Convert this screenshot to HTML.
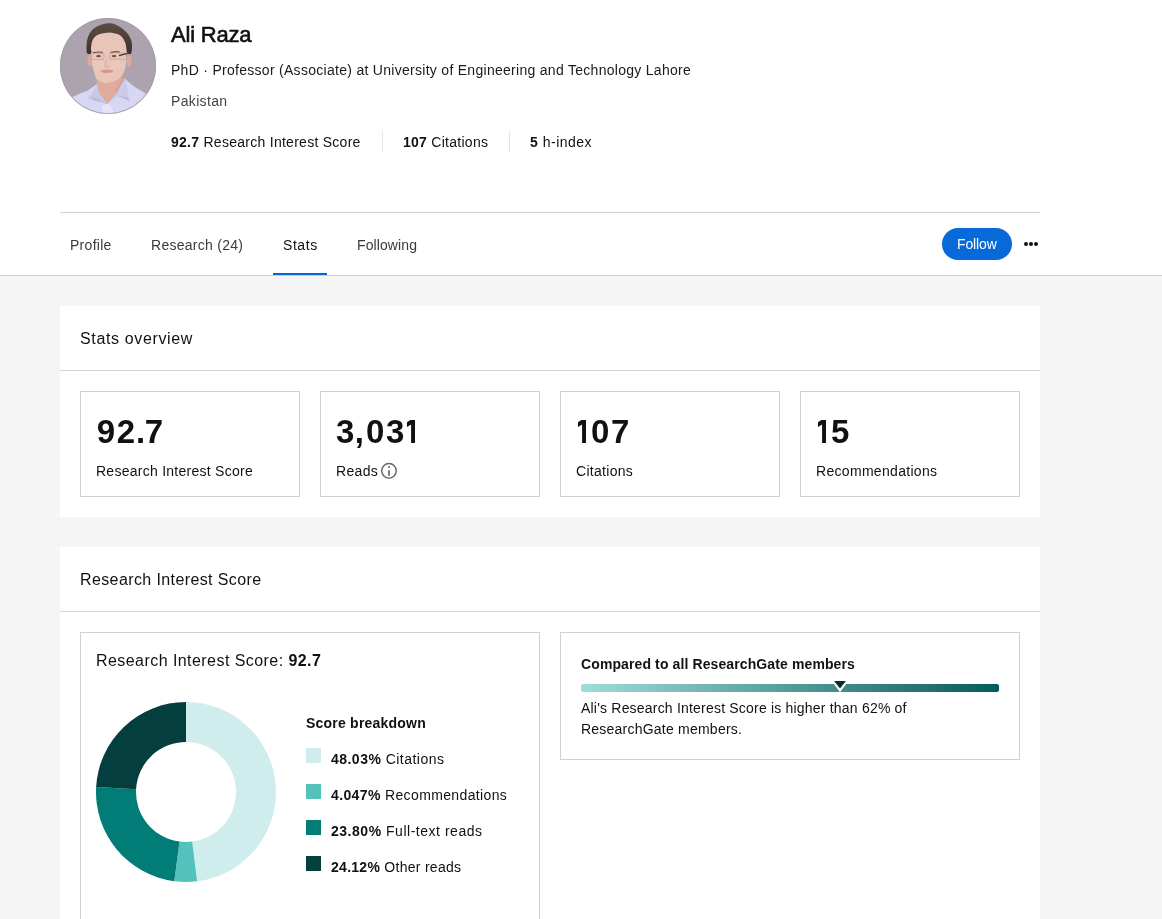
<!DOCTYPE html>
<html><head><meta charset="utf-8">
<style>
*{box-sizing:border-box;margin:0;padding:0}
html,body{width:1162px;height:919px;overflow:hidden}
body{font-family:"Liberation Sans",sans-serif;will-change:transform;background:#f5f5f5;color:#111;position:relative}
.a{position:absolute;white-space:nowrap;line-height:1}
#top{position:absolute;left:0;top:0;width:1162px;height:276px;background:#fff;border-bottom:1px solid #d1d1d1}
.hr{position:absolute;left:60px;top:212px;width:980px;height:1px;background:#d1d1d1}
#name{left:171px;top:24px;font-size:22px;-webkit-text-stroke:0.6px #111}
#sub{left:171px;top:63px;font-size:14px;color:#1a1a1a}
#loc{left:171px;top:94px;font-size:14px;color:#444}
.st{top:135px;font-size:14px;color:#111}
.sep{position:absolute;top:131px;width:1px;height:21px;background:#e4e4e4}
.tab{top:238px;font-size:14px;color:#3a3a3a}
.uline{position:absolute;left:273px;top:273px;width:54px;height:2px;background:#0a66d0}
.follow{position:absolute;left:942px;top:228px;width:70px;height:32px;border-radius:16px;background:#076ad8}
#fol{color:#fff;font-size:14px;left:957px;top:237px}
.dot{position:absolute;top:242px;width:4px;height:4px;border-radius:2px;background:#111}
.panel{position:absolute;left:60px;width:980px;background:#fff}
.ptitle{font-size:16px;color:#111}
.pdiv{position:absolute;left:0;width:980px;height:1px;background:#d3d3d3}
.card{position:absolute;border:1px solid #d1d1d1;background:#fff}
.big{font-size:33px;font-weight:bold;color:#111}
.lbl{font-size:14px;color:#111}
.sq{position:absolute;left:306px;width:15px;height:15px}
.lg{font-size:14px;color:#111}
#name{letter-spacing:-0.2px}
#sub{letter-spacing:0.286px}
#loc{letter-spacing:0.34px}
#st1{letter-spacing:0.27px}
#st2{letter-spacing:0.27px}
#st3{letter-spacing:0.5px}
#t1{letter-spacing:0.28px}
#t2{letter-spacing:0.275px}
#t3{letter-spacing:0.57px}
#t4{letter-spacing:0.1px}
#fol{letter-spacing:-0.14px}
#p1t{letter-spacing:0.64px}
#l1{letter-spacing:0.26px}
#l2{letter-spacing:0.35px}
#l3{letter-spacing:0.29px}
#l4{letter-spacing:0.31px}
#p2t{letter-spacing:0.39px}
#ris{letter-spacing:0.44px}
#cmp{letter-spacing:0.11px}
#ali1{letter-spacing:0.2px}
#ali2{letter-spacing:0.225px}
#sbd{letter-spacing:0.22px}
#lg1{letter-spacing:0.47px}
#lg2{letter-spacing:0.37px}
#lg3{letter-spacing:0.52px}
#lg4{letter-spacing:0.28px}
</style></head><body>
<div id="top">
  <svg class="a" style="left:60px;top:18px" width="96" height="96" viewBox="0 0 96 96">
    <defs><clipPath id="cc"><circle cx="48" cy="48" r="48"/></clipPath><linearGradient id="hg" x1="0" y1="0" x2="0" y2="1"><stop offset="0" stop-color="#5e4d45"/><stop offset="1" stop-color="#3d302b"/></linearGradient><filter id="bl" x="-10%" y="-10%" width="120%" height="120%"><feGaussianBlur stdDeviation="0.65"/></filter></defs>
    <circle cx="48" cy="48" r="48" fill="#aca3af"/>
    <g clip-path="url(#cc)"><g filter="url(#bl)">
      <path d="M4 96 L9 81 Q14 77.5 27 73 L37 66 L47 86 L57 74 L65 60.5 Q72 68 80 72 Q86 75 90 80 L94 96 Z" fill="#d8d7f3"/>
      <path d="M36.5 60 L36.8 67 L39 75 L47 86.5 L57 75 L64.5 60 Z" fill="#dfab9d"/>
      <path d="M57 75 L64.5 60 L62 58 L55 74 Z" fill="#d59e92" opacity="0.6"/>
      <path d="M36.8 67.5 L28 80.8 L35 82 L47 86.5 L39 75 Z" fill="#c9c7e8"/>
      <path d="M29 78 L46 84.5 L35 83 Z" fill="#b9b6dc"/>
      <path d="M65.3 61 L69.5 82.5 L57.5 78 L47 86.5 L57 75 Z" fill="#cdcbea"/>
      <path d="M56.5 77.5 L69.3 83 L68 79.5 Z" fill="#b9b6dc"/>
      <path d="M42 87 L46 86 L50 86.5 L55 96 L42 96 Z" fill="#e4e3f8"/>
      <path d="M31.0 34.0C30.9 37.2 31.1 41.0 31.5 44.0C31.9 47.0 32.8 49.3 33.5 52.0C34.2 54.7 34.8 58.0 36.0 60.0C37.2 62.0 39.3 63.2 41.0 64.0C42.7 64.8 44.3 65.1 46.3 65.0C48.3 64.9 50.7 64.3 53.0 63.5C55.3 62.7 58.2 61.6 60.0 60.0C61.8 58.4 63.0 56.3 64.0 54.0C65.0 51.7 65.6 49.0 66.0 46.0C66.4 43.0 66.5 39.3 66.5 36.0C66.5 32.7 66.8 29.0 66.0 26.0C65.2 23.0 63.7 19.8 62.0 18.0C60.3 16.2 58.2 15.6 56.0 15.0C53.8 14.4 51.5 14.3 49.0 14.4C46.5 14.5 43.3 14.6 41.0 15.3C38.7 16.0 36.5 16.9 35.0 18.5C33.5 20.1 32.7 22.4 32.0 25.0C31.3 27.6 31.1 30.8 31.0 34.0Z" fill="#e9c4b8"/>
      <ellipse cx="40" cy="48" rx="5.5" ry="4.5" fill="#efd1c7" opacity="0.3"/>
      <ellipse cx="56" cy="47" rx="6" ry="4.5" fill="#f0d3ca" opacity="0.3"/>
      <ellipse cx="29.8" cy="42.5" rx="2.2" ry="6" fill="#dcaa9c"/>
      <ellipse cx="69" cy="43" rx="2.6" ry="5.8" fill="#dcaa9c"/>
      <path d="M27.1 35.0C26.3 33.2 26.5 27.6 26.8 24.5C27.1 21.4 28.0 18.7 29.2 16.3C30.4 13.9 32.0 11.9 34.1 10.3C36.2 8.7 39.2 7.3 41.8 6.5C44.3 5.7 47.1 5.2 49.4 5.2C51.7 5.2 53.4 5.7 55.4 6.5C57.4 7.3 59.3 8.4 61.3 9.8C63.3 11.2 65.7 13.2 67.3 15.2C68.9 17.2 70.3 19.6 71.1 21.8C71.9 24.0 72.0 26.0 72.0 28.3C72.0 30.6 71.9 34.3 71.1 35.4C70.3 36.5 68.2 36.3 67.3 34.8C66.4 33.2 66.5 28.6 65.7 26.1C64.9 23.6 63.7 21.2 62.4 19.6C61.1 18.0 60.3 17.2 58.1 16.3C55.9 15.4 52.3 14.5 49.4 14.4C46.5 14.3 43.1 15.1 40.7 15.8C38.3 16.5 36.7 17.2 35.2 18.5C33.8 19.8 32.7 21.4 32.0 23.4C31.3 25.4 31.0 28.6 30.9 30.5C30.8 32.4 32.0 34.2 31.4 35.0C30.8 35.8 27.9 36.8 27.1 35.0Z" fill="url(#hg)"/>
      <path d="M33 34.8 Q38 33.5 43 34.5" stroke="#6d5049" stroke-width="1.1" fill="none"/>
      <path d="M50.5 34.5 Q55 33 60 34" stroke="#6d5049" stroke-width="1.1" fill="none"/>
      <rect x="31" y="35.5" width="13" height="6" rx="2" fill="none" stroke="#8f6b68" stroke-width="0.6" opacity="0.45"/>
      <rect x="49.4" y="35" width="17.4" height="6.3" rx="2" fill="none" stroke="#8f6b68" stroke-width="0.6" opacity="0.45"/>
      <path d="M59 37.6 L67.5 35.3" stroke="#3a2f2f" stroke-width="1.3" fill="none"/>
      <ellipse cx="38.5" cy="38.2" rx="2.4" ry="1.1" fill="#6b4d49"/>
      <ellipse cx="54" cy="38.1" rx="2.4" ry="1.1" fill="#6b4d49"/>
      <path d="M46 42 Q45.5 46 44.5 48 Q47 49.5 50 48.3" stroke="#d7a699" stroke-width="0.9" fill="none"/>
      <ellipse cx="46.8" cy="53.3" rx="6.3" ry="1.7" fill="#d29891"/>
    </g></g>
    <circle cx="48" cy="48" r="47.6" fill="none" stroke="#a098a3" stroke-width="0.8"/>
  </svg>
  <div class="a" id="name">Ali Raza</div>
  <div class="a" id="sub">PhD · Professor (Associate) at University of Engineering and Technology Lahore</div>
  <div class="a" id="loc">Pakistan</div>
  <div class="a st" id="st1" style="left:171px"><b>92.7</b> Research Interest Score</div>
  <div class="sep" style="left:382px"></div>
  <div class="a st" id="st2" style="left:403px"><b>107</b> Citations</div>
  <div class="sep" style="left:509px"></div>
  <div class="a st" id="st3" style="left:530px"><b>5</b> h-index</div>
  <div class="hr"></div>
  <div class="a tab" id="t1" style="left:70px">Profile</div>
  <div class="a tab" id="t2" style="left:151px">Research (24)</div>
  <div class="a tab" id="t3" style="left:283px;color:#111">Stats</div>
  <div class="a tab" id="t4" style="left:357px">Following</div>
  <div class="uline"></div>
  <div class="follow"></div>
  <div class="a" id="fol">Follow</div>
  <div class="dot" style="left:1024px"></div>
  <div class="dot" style="left:1029px"></div>
  <div class="dot" style="left:1034px"></div>
</div>

<div class="panel" style="top:306px;height:211px">
  <div class="pdiv" style="top:64px"></div>
  <div class="card" style="left:20px;top:85px;width:220px;height:106px"></div>
  <div class="card" style="left:260px;top:85px;width:220px;height:106px"></div>
  <div class="card" style="left:500px;top:85px;width:220px;height:106px"></div>
  <div class="card" style="left:740px;top:85px;width:220px;height:106px"></div>
</div>
<div class="a ptitle" id="p1t" style="left:80px;top:331px">Stats overview</div>
<div class="a big" style="left:96.7px;top:415px">9</div>
<div class="a big" style="left:116.8px;top:415px">2</div>
<div class="a big" style="left:135.9px;top:415px">.</div>
<div class="a big" style="left:144.8px;top:415px">7</div>
<div class="a big" style="left:336.0px;top:415px">3</div>
<div class="a big" style="left:354.8px;top:415px">,</div>
<div class="a big" style="left:365.9px;top:415px">0</div>
<div class="a big" style="left:386.0px;top:415px">3</div>
<svg class="a" style="left:406.9px;top:419.9px" width="9" height="23" viewBox="0 0 9 23"><path d="M3.4 0H8V23H4.1V4.5L0 6.9V2.2Z" fill="#111"/></svg>
<svg class="a" style="left:577.9px;top:419.9px" width="9" height="23" viewBox="0 0 9 23"><path d="M3.4 0H8V23H4.1V4.5L0 6.9V2.2Z" fill="#111"/></svg>
<div class="a big" style="left:590.9px;top:415px">0</div>
<div class="a big" style="left:611.0px;top:415px">7</div>
<svg class="a" style="left:817.9px;top:419.9px" width="9" height="23" viewBox="0 0 9 23"><path d="M3.4 0H8V23H4.1V4.5L0 6.9V2.2Z" fill="#111"/></svg>
<div class="a big" style="left:831.0px;top:415px">5</div>
<div class="a lbl" id="l1" style="left:96px;top:464px">Research Interest Score</div>
<div class="a lbl" id="l2" style="left:336px;top:464px">Reads</div>
<svg class="a" style="left:380px;top:462px" width="18" height="18" viewBox="0 0 18 18"><circle cx="9" cy="8.8" r="7.3" fill="none" stroke="#666" stroke-width="1.4"/><rect x="8.1" y="8.2" width="1.8" height="5.6" fill="#707070"/><rect x="8.1" y="4.2" width="1.8" height="1.7" fill="#666"/></svg>
<div class="a lbl" id="l3" style="left:576px;top:464px">Citations</div>
<div class="a lbl" id="l4" style="left:816px;top:464px">Recommendations</div>

<div class="panel" style="top:547px;height:400px">
  <div class="pdiv" style="top:64px"></div>
  <div class="card" style="left:20px;top:85px;width:460px;height:400px"></div>
  <div class="card" style="left:500px;top:85px;width:460px;height:128px"></div>
</div>
<div class="a ptitle" id="p2t" style="left:80px;top:572px">Research Interest Score</div>
<div class="a" id="ris" style="left:96px;top:653px;font-size:16px">Research Interest Score: <b>92.7</b></div>
<svg class="a" style="left:96px;top:702px" width="180" height="180" viewBox="0 0 180 180">
<path d="M90.00 0.00A90 90 0 0 1 101.10 179.31L96.17 139.62A50 50 0 0 0 90.00 40.00Z" fill="#d0eded"/>
<path d="M101.10 179.31A90 90 0 0 1 78.28 179.23L83.49 139.57A50 50 0 0 0 96.17 139.62Z" fill="#54c1bd"/>
<path d="M78.28 179.23A90 90 0 0 1 0.14 85.03L40.08 87.24A50 50 0 0 0 83.49 139.57Z" fill="#017c77"/>
<path d="M0.14 85.03A90 90 0 0 1 90.00 0.00L90.00 40.00A50 50 0 0 0 40.08 87.24Z" fill="#043e3e"/>
</svg>
<div class="a" id="sbd" style="left:306px;top:716px;font-size:14px;font-weight:bold">Score breakdown</div>
<div class="sq" style="top:748px;background:#d0eded"></div>
<div class="sq" style="top:784px;background:#54c1bd"></div>
<div class="sq" style="top:820px;background:#017c77"></div>
<div class="sq" style="top:856px;background:#043e3e"></div>
<div class="a lg" id="lg1" style="left:331px;top:752px"><b>48.03%</b> Citations</div>
<div class="a lg" id="lg2" style="left:331px;top:788px"><b>4.047%</b> Recommendations</div>
<div class="a lg" id="lg3" style="left:331px;top:824px"><b>23.80%</b> Full-text reads</div>
<div class="a lg" id="lg4" style="left:331px;top:860px"><b>24.12%</b> Other reads</div>

<div class="a" id="cmp" style="left:581px;top:657px;font-size:14px;font-weight:bold">Compared to all ResearchGate members</div>
<div class="a" style="left:581px;top:684px;width:418px;height:8px;border-radius:2px;background:linear-gradient(90deg,#a0dcda,#065b59)"></div>
<svg class="a" style="left:828px;top:678px" width="24" height="16" viewBox="0 0 24 16"><polygon points="3.6,3 20.4,3 12,14.2" fill="#fff"/><polygon points="6.1,3 17.9,3 12,10.4" fill="#032c2b"/></svg>
<div class="a" id="ali1" style="left:581px;top:701px;font-size:14px">Ali's Research Interest Score is higher than 62% of</div>
<div class="a" id="ali2" style="left:581px;top:722px;font-size:14px">ResearchGate members.</div>
</body></html>
